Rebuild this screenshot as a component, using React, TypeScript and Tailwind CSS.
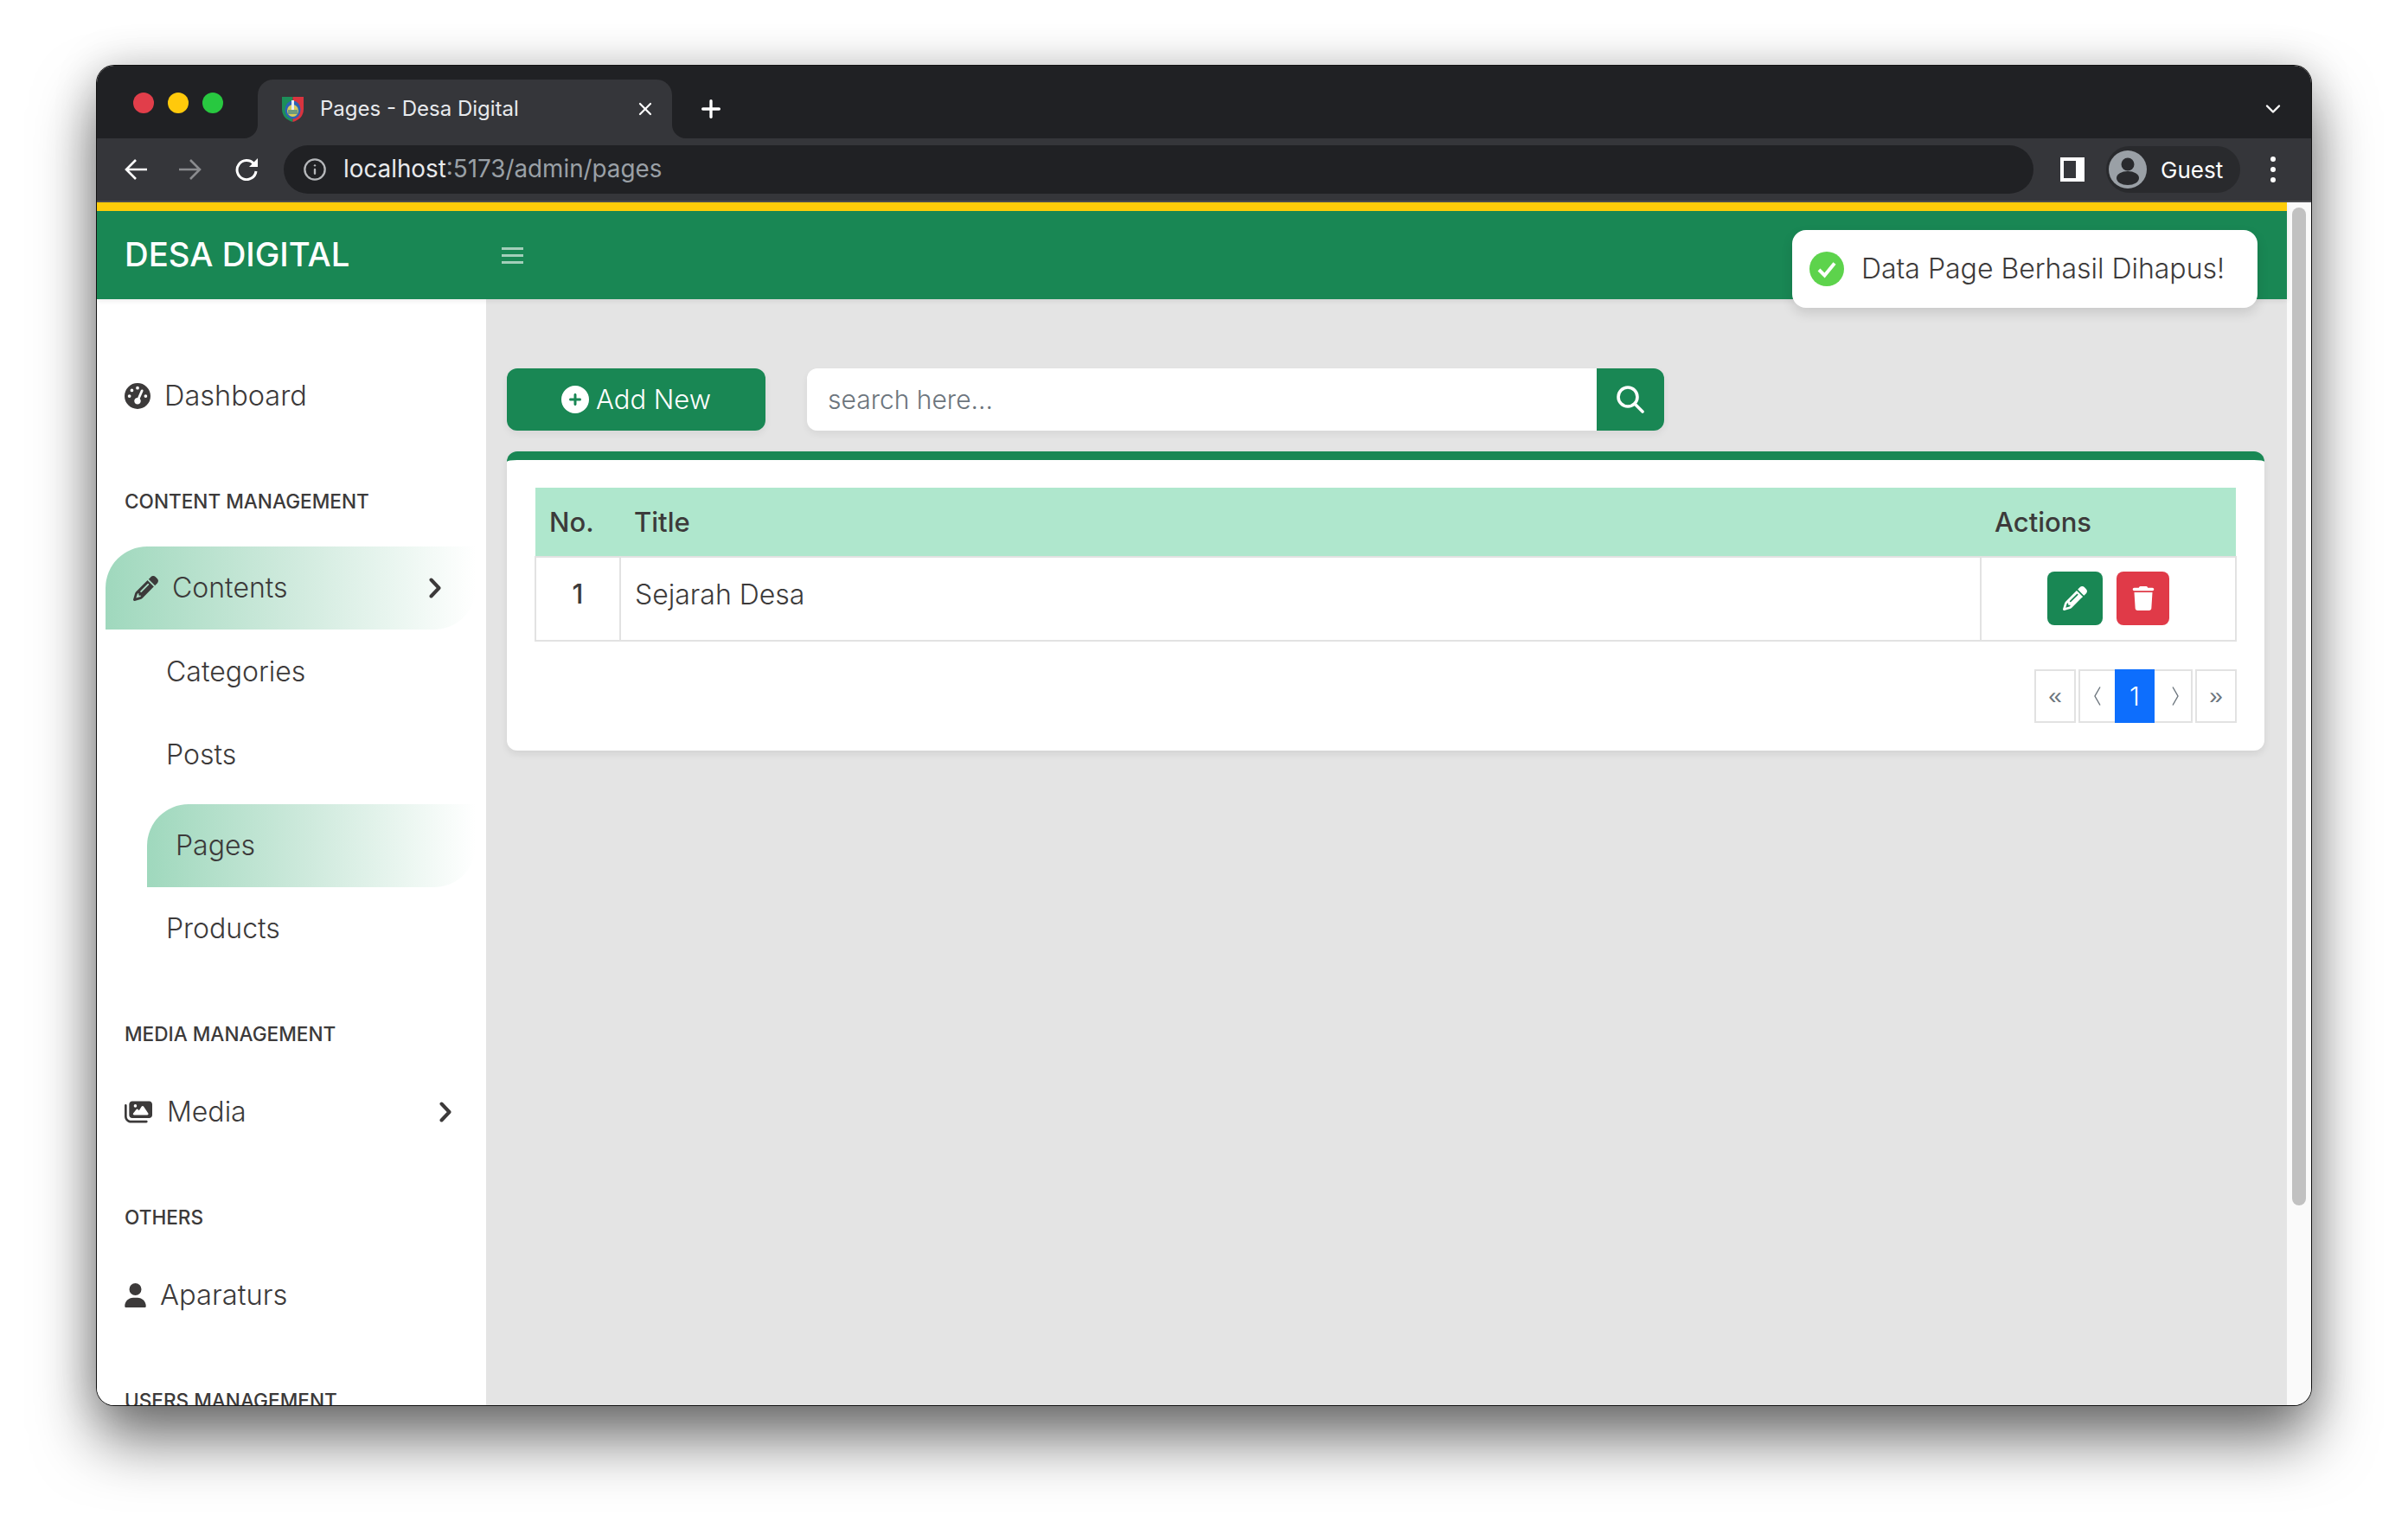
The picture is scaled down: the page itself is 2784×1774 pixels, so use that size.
import { ChevronDown, Info, Plus, X } from 'lucide-react';
import { FaCirclePlus, FaGaugeHigh, FaImages, FaPencil, FaTrash, FaUser } from 'react-icons/fa6';

const pillClass =
  'flex items-center h-[96px] rounded-tl-[48px] rounded-br-[48px] bg-gradient-to-r from-[#9fd8bd] via-[#cfeadd] to-white';

function Heading({ label, className }: { label: string; className: string }) {
  return (
    <div className={`flex items-center h-[40px] pl-[32px] text-[22.6px] font-medium text-[#3c3a3a] whitespace-nowrap ${className}`}>
      {label}
    </div>
  );
}

function SubItem({ label, className }: { label: string; className: string }) {
  return <div className={`flex items-center h-[96px] text-[32px] font-light text-[#3c3a3a] ${className}`}>{label}</div>;
}

function Favicon() {
  return (
    <svg width="25" height="29" viewBox="0 0 25 29" className="shrink-0">
      <path d="M0 0H12.5V29C6 27 0 23 0 14Z" fill="#1d8f5a" />
      <path d="M12.5 0H25V14C25 23 19 27 12.5 29Z" fill="#d9343f" />
      <ellipse cx="12.5" cy="15" rx="9" ry="10.5" fill="#2c63b5" />
      <ellipse cx="12.5" cy="16" rx="6.5" ry="7" fill="#d7c95a" />
      <rect x="11" y="4" width="3" height="12" fill="#e8eef5" />
      <rect x="7" y="15" width="11" height="5" fill="#6f9a7d" />
    </svg>
  );
}

function NavArrow({ flip, color, className }: { flip?: boolean; color: string; className: string }) {
  return (
    <svg width="28" height="26" viewBox="0 0 28 26" className={className}>
      <path
        d={flip ? 'M1 13H25M14 2L25 13L14 24' : 'M27 13H3M14 2L3 13L14 24'}
        fill="none"
        stroke={color}
        strokeWidth="2.6"
      />
    </svg>
  );
}

function MenuChevron() {
  return (
    <svg width="14" height="24" viewBox="0 0 14 24" className="ml-auto shrink-0">
      <path d="M2.5 2.5L11.5 12L2.5 21.5" fill="none" stroke="#3c3a3a" strokeWidth="4" strokeLinecap="round" strokeLinejoin="round" />
    </svg>
  );
}

function BrowserChrome() {
  return (
    <>
      <div className="flex h-[84px] bg-[#202124] pt-[16px]">
        <div className="flex gap-[16px] pl-[42px] pt-[15px]">
          <span className="w-[24px] h-[24px] rounded-full bg-[#e13e4a]" />
          <span className="w-[24px] h-[24px] rounded-full bg-[#ffc90b]" />
          <span className="w-[24px] h-[24px] rounded-full bg-[#28c840]" />
        </div>
        <div className="relative flex items-center w-[479px] h-[68px] ml-[40px] pl-[28px] pr-[19px] bg-[#35363a] rounded-t-[18px]">
          <svg width="16" height="16" viewBox="0 0 16 16" className="absolute -left-[16px] bottom-0">
            <path d="M16 0A16 16 0 0 1 0 16H16Z" fill="#35363a" />
          </svg>
          <svg width="16" height="16" viewBox="0 0 16 16" className="absolute -right-[16px] bottom-0">
            <path d="M0 0A16 16 0 0 0 16 16H0Z" fill="#35363a" />
          </svg>
          <Favicon />
          <span className="ml-[19px] text-[24px] text-[#e8eaed]">Pages - Desa Digital</span>
          <X className="ml-auto w-[24px] h-[24px] text-white" strokeWidth={2.2} />
        </div>
        <Plus className="ml-[29px] mt-[18px] w-[32px] h-[32px] text-white" strokeWidth={2.5} />
        <ChevronDown className="ml-auto mr-[30px] mt-[20px] w-[28px] h-[28px] text-white" strokeWidth={2} />
      </div>
      <div className="flex items-center h-[74px] bg-[#35363a] border-b-2 border-[#4b4c50]">
        <NavArrow color="#ffffff" className="ml-[31px]" />
        <NavArrow flip color="#8a8b8e" className="ml-[35px]" />
        <svg width="28" height="26" viewBox="0 0 28 26" className="ml-[37px]">
          <path d="M22.5 6.5A11 11 0 1 0 25 15" fill="none" stroke="#ffffff" strokeWidth="3" />
          <path d="M27 0V10H17Z" fill="#ffffff" />
        </svg>
        <div className="flex items-center w-[2023px] h-[56px] ml-[29px] pl-[22px] rounded-full bg-[#202124] text-[27.8px]">
          <Info className="w-[28px] h-[28px] text-[#b5b7ba]" strokeWidth={2} />
          <span className="ml-[19px] text-[#e8eaed]">localhost</span>
          <span className="text-[#9aa0a6]">:5173/admin/pages</span>
        </div>
        <div className="w-[28px] h-[28px] ml-[31px] border-[4px] border-r-[10px] border-white" />
        <div className="flex items-center w-[155px] h-[54px] ml-[25px] pl-[3px] rounded-full bg-[#292a2d]">
          <svg width="44" height="44" viewBox="0 0 44 44">
            <circle cx="22" cy="22" r="22" fill="#9aa0a6" />
            <circle cx="22" cy="16" r="7.5" fill="#292a2d" />
            <ellipse cx="22" cy="32" rx="13" ry="8" fill="#292a2d" />
          </svg>
          <span className="ml-[16px] text-[26px] text-white">Guest</span>
        </div>
        <div className="flex flex-col gap-[6px] ml-[35px]">
          <span className="w-[6px] h-[6px] rounded-full bg-white" />
          <span className="w-[6px] h-[6px] rounded-full bg-white" />
          <span className="w-[6px] h-[6px] rounded-full bg-white" />
        </div>
      </div>
    </>
  );
}

function Sidebar() {
  return (
    <aside className="w-[450px] shrink-0 bg-white overflow-hidden pt-[64px] text-[#3c3a3a]">
      <div className="flex items-center h-[96px] pl-[32px] text-[32.5px] font-light">
        <FaGaugeHigh className="w-[30px] h-[30px] text-[#3c3a3a]" />
        <span className="ml-[16px]">Dashboard</span>
      </div>

      <Heading label="CONTENT MANAGEMENT" className="mt-[54px]" />

      <div className={`${pillClass} w-[428px] mt-[32px] ml-[10px] pl-[32px] pr-[40px] text-[32px] font-light`}>
        <FaPencil className="w-[29px] h-[29px]" />
        <span className="ml-[16px]">Contents</span>
        <MenuChevron />
      </div>
      <SubItem label="Categories" className="mt-[1px] pl-[80px]" />
      <SubItem label="Posts" className="pl-[80px]" />
      <div className={`${pillClass} w-[380px] mt-[9px] ml-[58px] pl-[33px] text-[32px] font-light`}>Pages</div>
      <SubItem label="Products" className="pl-[80px]" />

      <Heading label="MEDIA MANAGEMENT" className="mt-[54px]" />
      <div className="flex items-center h-[96px] mt-[22px] pl-[32px] pr-[40px] text-[32px] font-light">
        <FaImages className="w-[32px] h-[32px]" />
        <span className="ml-[17px]">Media</span>
        <MenuChevron />
      </div>

      <Heading label="OTHERS" className="mt-[54px]" />
      <div className="flex items-center h-[96px] mt-[22px] pl-[32px] text-[32.7px] font-light">
        <FaUser className="w-[25px] h-[28px]" />
        <span className="ml-[16px]">Aparaturs</span>
      </div>

      <Heading label="USERS MANAGEMENT" className="mt-[54px]" />
    </aside>
  );
}

function PageChevron({ flip }: { flip?: boolean }) {
  return (
    <svg width="8" height="22" viewBox="0 0 8 22">
      <path d={flip ? 'M1 0.5L7 11L1 21.5' : 'M7 0.5L1 11L7 21.5'} fill="none" stroke="#6c757d" strokeWidth="1.4" />
    </svg>
  );
}

function Content() {
  return (
    <main className="flex-1 bg-[#e4e4e4] pt-[80px] pl-[24px] pr-[26px]">
      <div className="flex gap-[48px]">
        <button className="flex items-center justify-center w-[299px] h-[72px] rounded-[12px] bg-[#198754] text-white text-[31px] font-light shadow-[0_4px_8px_rgba(0,0,0,0.06)]">
          <FaCirclePlus className="w-[32px] h-[32px] mr-[8px]" />
          Add New
        </button>
        <div className="flex w-[991px] h-[72px] rounded-[12px] overflow-hidden shadow-[0_4px_8px_rgba(0,0,0,0.06)]">
          <div className="flex-1 flex items-center bg-white pl-[24px] text-[30px] font-light text-[#6c757d]">search here...</div>
          <div className="flex items-center justify-center w-[78px] bg-[#198754]">
            <svg width="32" height="32" viewBox="0 0 32 32">
              <circle cx="13" cy="13" r="11" fill="none" stroke="#ffffff" strokeWidth="3.6" />
              <path d="M21 21L30 30" stroke="#ffffff" strokeWidth="3.6" strokeLinecap="round" />
            </svg>
          </div>
        </div>
      </div>

      <section className="mt-[24px] h-[346px] rounded-[12px] border-t-[10px] border-[#198754] bg-white px-[32px] pt-[32px] shadow-[0_4px_8px_rgba(0,0,0,0.08)]">
        <table className="w-full table-fixed border-collapse text-[#3c3a3a] text-[32px]">
          <thead>
            <tr className="h-[80px] bg-[#afe7cd] text-left">
              <th className="w-[98px] pl-[16px] pt-[2px] text-[31px] font-medium">No.</th>
              <th className="pl-[16px] pt-[2px] text-[31px] font-medium">Title</th>
              <th className="w-[295px] pl-[16px] pt-[2px] text-[31px] font-medium">Actions</th>
            </tr>
          </thead>
          <tbody>
            <tr className="h-[97px]">
              <td className="border-2 border-[#e2e2e2] align-top pt-[19px] text-center text-[31px] font-medium">1</td>
              <td className="border-2 border-[#e2e2e2] align-top pt-[19px] pl-[16px] font-light">Sejarah Desa</td>
              <td className="border-2 border-[#e2e2e2] align-top pt-[16px] pl-[76px]">
                <div className="flex gap-[16px]">
                  <div className="flex items-center justify-center w-[64px] h-[62px] rounded-[8px] bg-[#198754]">
                    <FaPencil className="w-[28px] h-[28px] text-white" />
                  </div>
                  <div className="flex items-center justify-center w-[61px] h-[62px] rounded-[8px] bg-[#e03a48]">
                    <FaTrash className="w-[26px] h-[28px] text-white" />
                  </div>
                </div>
              </td>
            </tr>
          </tbody>
        </table>

        <div className="flex justify-end mt-[32px] h-[62px] text-[28px] text-[#6c757d] font-['Liberation_Sans',sans-serif]">
          <div className="flex items-center justify-center w-[48px] mr-[3px] border-2 border-[#e2e2e2]">«</div>
          <div className="flex items-center justify-center w-[42px] border-2 border-r-0 border-[#e2e2e2]">
            <PageChevron />
          </div>
          <div className="flex items-center justify-center w-[46px] bg-[#0d6efd] text-white text-[30px] font-light font-['Inter',sans-serif]">1</div>
          <div className="flex items-center justify-center w-[44px] mr-[3px] pl-[5px] border-2 border-l-0 border-[#e2e2e2]">
            <PageChevron flip />
          </div>
          <div className="flex items-center justify-center w-[48px] border-2 border-[#e2e2e2]">»</div>
        </div>
      </section>
    </main>
  );
}

function Toast() {
  return (
    <div className="absolute top-[32px] left-[1960px] z-20 flex items-center w-[538px] h-[90px] rounded-[16px] bg-white pl-[20px] shadow-[0_6px_14px_rgba(0,0,0,0.12)]">
      <svg width="40" height="40" viewBox="0 0 40 40" className="shrink-0">
        <circle cx="20" cy="20" r="20" fill="#5dd34c" />
        <path d="M11 21L17.5 27.5L29 13.5" fill="none" stroke="#fff" strokeWidth="4" />
      </svg>
      <span className="ml-[20px] text-[32px] font-light text-[#3c3a3a] whitespace-nowrap">Data Page Berhasil Dihapus!</span>
    </div>
  );
}

export default function App() {
  return (
    <div className="w-[2784px] h-[1774px] bg-white pt-[76px] pl-[112px] overflow-hidden font-['Inter',sans-serif]">
      <div className="flex flex-col w-[2560px] h-[1549px] rounded-[20px] overflow-hidden shadow-[0_0_0_1px_#111,0_40px_70px_rgba(0,0,0,0.55),0_0_50px_rgba(0,0,0,0.18)]">
        <BrowserChrome />
        <div className="flex flex-1 min-h-0">
          <div className="relative flex flex-col flex-1 min-w-0">
            {/* Navbar */}
            <header className="relative z-10 flex items-center h-[112px] shrink-0 border-t-[10px] border-[#ffcd0a] bg-[#198754] pl-[32px] shadow-[0_2px_6px_rgba(0,0,0,0.08)]">
              <div className="w-[436px] text-[38.3px] font-medium text-white">DESA DIGITAL</div>
              <div className="flex flex-col gap-[5px] w-[25px]">
                <span className="h-[3px] bg-white/60" />
                <span className="h-[3px] bg-white/60" />
                <span className="h-[3px] bg-white/60" />
              </div>
            </header>
            <div className="flex flex-1 min-h-0">
              <Sidebar />
              <Content />
            </div>
            <Toast />
          </div>
          {/* Scrollbar */}
          <div className="w-[28px] shrink-0 bg-[#fafafa] pt-[6px] pl-[6px]">
            <div className="w-[16px] h-[1154px] rounded-full bg-[#c1c1c1]" />
          </div>
        </div>
      </div>
    </div>
  );
}
